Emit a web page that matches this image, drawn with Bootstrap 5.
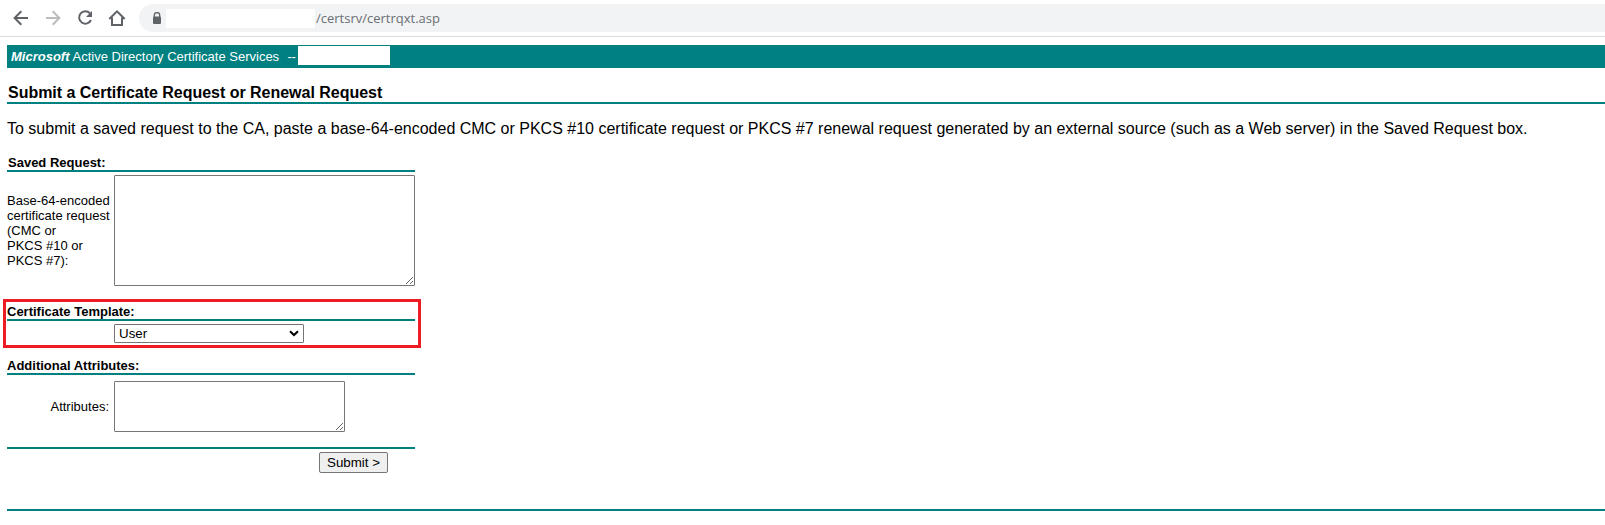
<!DOCTYPE html>
<html lang="en">
<head>
<meta charset="utf-8">
<title>Microsoft Active Directory Certificate Services</title>
<link href="https://cdn.jsdelivr.net/npm/bootstrap@5.3.0/dist/css/bootstrap.min.css" rel="stylesheet">
<style>
body{font-family:"Liberation Sans",Arial,sans-serif;font-size:13px;line-height:15px;color:#000;background:#fff;overflow:hidden}
.toolbar{height:37px;border-bottom:1px solid #dadce0;padding:4px 0 4px 12px}
.toolbar svg{display:block;flex:none}
.nav-icons{width:127px;gap:14px;padding-top:5px}
.omnibox{height:28px;background:#f1f3f4;border-radius:14px 0 0 14px;padding-left:13px;font:13px/28px "Open Sans","Noto Sans",sans-serif;color:#6b6f73}
.host-blank{width:149px;height:19px;background:#fff;margin-left:4px}
.url-path{margin-left:1px}
.page{padding:8px 0 0 7px}
.banner{height:23px;background:teal;color:#fff;padding-left:4px}
.svc{margin-left:3px;width:215px;white-space:nowrap}
.dashes{width:11px;letter-spacing:-.3px}
.ca-blank{width:92px;height:19px;background:#fff;margin:1px 0 0 -1px;align-self:flex-start}
.title-row{height:36px;border-bottom:2px solid teal;font-size:16px;line-height:18px;padding:16px 0 0 1px}
.title-row span{letter-spacing:-.02px}
.intro{font-size:16px;line-height:18px;height:36px;padding-top:16px;white-space:nowrap}
.form-area{width:408px}
.sec-head{border-bottom:2px solid teal}
.label-cell{width:107px;flex:none}
textarea.box{display:block;border:1px solid #767676;border-radius:1px;background:#fff;resize:both;padding:2px;margin:0}
.tpl-frame{width:418px;height:49px;border:3px solid #ed1c24;margin:13px 0 0 -4px;padding:0 3px 0 1px}
.tpl-select{width:190px;height:19px;border:1px solid #767676;border-radius:1px;padding:0 4px 0 4px;font-size:13.33px}
.submit-btn{width:69px;height:21px;border:1px solid #767676;border-radius:2px;background:#efefef;padding:0;font-size:13.33px;line-height:19px;color:#000}
</style>
</head>
<body>
<header class="toolbar d-flex">
  <nav class="nav-icons d-flex">
    <svg width="18" height="18" viewBox="0 0 18 18" fill="none" stroke="#5f6368" stroke-width="2"><path d="M16 9H3M9.3 2.3 2.6 9l6.7 6.7"/></svg>
    <svg width="18" height="18" viewBox="0 0 18 18" fill="none" stroke="#babcbe" stroke-width="2"><path d="M2 9h13M8.7 2.3 15.4 9l-6.7 6.7"/></svg>
    <svg width="18" height="18" viewBox="0 0 18 18" fill="none" stroke="#5f6368" stroke-width="2"><path d="M14 4.4A6.2 6.2 0 1 0 15 11"/><path d="M16 2v6h-6z" fill="#5f6368" stroke="none"/></svg>
    <svg width="18" height="18" viewBox="0 0 18 18" fill="none" stroke="#5f6368" stroke-width="2"><path d="M1.3 10 9 2.3l7.7 7.7M4 8.5V16h10V8.500"/></svg>
  </nav>
  <div class="omnibox d-flex align-items-center flex-grow-1">
    <svg width="10" height="13" viewBox="0 0 10 13"><path d="M2.300 5V3.300a2.700 2.700 0 0 1 5.400 0V5" fill="none" stroke="#5f6368" stroke-width="1.300"/><rect x="1" y="4.500" width="8" height="7.500" rx="1" fill="#5f6368"/></svg>
    <div class="host-blank"></div><span class="url-path">/certsrv/certrqxt.asp</span>
  </div>
</header>
<main class="page">
  <div class="banner d-flex align-items-center"><b><i>Microsoft</i></b><span class="svc">Active Directory Certificate Services</span><span class="dashes">--</span><div class="ca-blank"></div></div>
  <div class="title-row fw-bold"><span>Submit a Certificate Request or Renewal Request</span></div>
  <div class="intro"><span>To submit a saved request to the CA, paste a base-64-encoded CMC or PKCS #10 certificate request or PKCS #7 renewal request generated by an external source (such as a Web server) in the Saved Request box.</span></div>
  <form class="form-area">
    <div class="sec-head fw-bold" style="height:32px;padding:15px 0 0 1px">Saved Request:</div>
    <div class="d-flex" style="padding-top:3px">
      <div class="label-cell" style="padding-top:18px">Base-64-encoded<br>certificate request<br>(CMC or<br>PKCS #10 or<br>PKCS #7):</div>
      <textarea class="box" style="width:301px;height:111px"></textarea>
    </div>
    <div class="tpl-frame">
      <div class="sec-head fw-bold" style="height:19px;padding-top:2px">Certificate Template:</div>
      <div class="d-flex" style="padding-top:3px"><div class="label-cell"></div>
        <div class="tpl-select d-flex align-items-center justify-content-between"><span>User</span>
          <svg width="10" height="7" viewBox="0 0 10 7" fill="none" stroke="#000" stroke-width="2"><path d="M1 1.200 5 5l4-3.800"/></svg></div>
      </div>
    </div>
    <div class="sec-head fw-bold" style="height:27px;padding-top:10px">Additional Attributes:</div>
    <div class="d-flex" style="padding-top:6px">
      <div class="label-cell text-end" style="padding:18px 5px 0 0">Attributes:</div>
      <textarea class="box" style="width:231px;height:51px"></textarea>
    </div>
    <div class="sec-head" style="height:17px"></div>
    <div class="d-flex justify-content-end" style="padding:3px 27px 0 0"><button class="submit-btn" type="button">Submit &gt;</button></div>
  </form>
  <div class="sec-head" style="height:38px"></div>
</main>
<script src="https://cdn.jsdelivr.net/npm/bootstrap@5.3.0/dist/js/bootstrap.bundle.min.js"></script>
</body>
</html>
